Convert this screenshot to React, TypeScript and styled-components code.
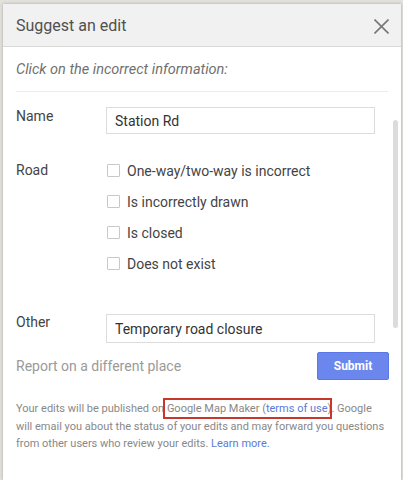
import React from "react";
import styled, { createGlobalStyle } from "styled-components";

const Global = createGlobalStyle`
  html, body { margin: 0; padding: 0; }
  body {
    background: #e3e1dc;
    font-family: Roboto, "Noto Sans", Arial, sans-serif;
    overflow: hidden;
    height: 480px;
  }
`;

const Page = styled.div`
  padding: 4px 2px 0 3px;
  height: 480px;
  box-sizing: border-box;
`;

const Dialog = styled.div`
  background: #fff;
  height: 100%;
  box-shadow: 0 0 3px rgba(0, 0, 0, 0.25);
  display: flex;
  flex-direction: column;
  position: relative;
`;

const Header = styled.div`
  background: #f1f1f1;
  border-bottom: 1px solid #d9d9d9;
  height: 42px;
  display: flex;
  align-items: center;
  justify-content: space-between;
  padding: 0 12px 0 13px;
`;

const Title = styled.div`
  font-size: 16px;
  color: #505050;
  padding-top: 1px;
`;

const Close = styled.button`
  border: none;
  background: none;
  padding: 0;
  width: 15px;
  height: 15px;
  display: flex;
  align-items: center;
  justify-content: center;
  cursor: pointer;
  margin-top: 2px;
`;

const Body = styled.div`
  padding: 0 12px 0 13px;
  position: relative;
`;

const Intro = styled.div`
  font-style: italic;
  font-size: 14.5px;
  color: #707070;
  padding: 14px 0 13px;
  border-bottom: 1px solid #ececec;
  margin-right: 1px;
`;

const Row = styled.div<{ $top: number }>`
  display: flex;
  align-items: flex-start;
  margin-top: ${(p) => p.$top}px;
`;

const Label = styled.div<{ $pt: number }>`
  width: 90px;
  font-size: 14px;
  color: #444;
  padding-top: ${(p) => p.$pt}px;
`;

const Field = styled.div<{ $h: number }>`
  width: 269px;
  height: ${(p) => p.$h}px;
  box-sizing: border-box;
  border: 1px solid #dcdcdc;
  padding: 0 8px;
  display: flex;
  align-items: center;
  font-size: 14px;
  color: #333;
`;

const Checks = styled.div`
  display: flex;
  flex-direction: column;
  gap: 14px;
`;

const Check = styled.label`
  display: flex;
  align-items: center;
  gap: 7px;
  font-size: 14px;
  color: #444;
  height: 17px;
  padding-left: 1px;
`;

const Box = styled.span`
  width: 11px;
  height: 11px;
  border: 1px solid #c8c8c8;
  border-radius: 1px;
  background: #fff;
`;

const Actions = styled.div`
  display: flex;
  align-items: center;
  justify-content: space-between;
  margin-top: 9px;
`;

const OtherLink = styled.div`
  font-size: 14px;
  color: #9a9a9a;
`;

const Submit = styled.button`
  width: 72px;
  height: 28px;
  border: 1px solid #5b78e6;
  border-radius: 2px;
  background: #6b87ee;
  color: #fff;
  font-family: Roboto, Arial, sans-serif;
  font-weight: bold;
  font-size: 12px;
`;

const Footer = styled.p`
  margin: 20px 0 0;
  font-size: 11px;
  line-height: 17.5px;
  color: #888;
`;

const Marked = styled.span`
  outline: 2px solid #c9372c;
  outline-offset: 2px;
`;

const A = styled.a`
  color: #5a7ad6;
  text-decoration: none;
`;

const Scrollbar = styled.div`
  position: absolute;
  right: 3px;
  top: 116px;
  width: 5px;
  height: 208px;
  border-radius: 3px;
  background: #dcdcdc;
`;

export default function App() {
  const items = [
    "One-way/two-way is incorrect",
    "Is incorrectly drawn",
    "Is closed",
    "Does not exist",
  ];
  return (
    <>
      <Global />
      <Page>
        <Dialog>
          <Header>
            <Title>Suggest an edit</Title>
            <Close aria-label="Close">
              <svg width="15" height="15" viewBox="0 0 15 15">
                <path d="M0.5 0.5L14.5 14.5M14.5 0.5L0.5 14.5" stroke="#777" strokeWidth="1.6" />
              </svg>
            </Close>
          </Header>
          <Body>
            <Intro>Click on the incorrect information:</Intro>
            <Row $top={15}>
              <Label $pt={1}>Name</Label>
              <Field $h={27}>Station Rd</Field>
            </Row>
            <Row $top={28}>
              <Label $pt={0}>Road</Label>
              <Checks>
                {items.map((t) => (
                  <Check key={t}>
                    <Box />
                    {t}
                  </Check>
                ))}
              </Checks>
            </Row>
            <Row $top={42}>
              <Label $pt={0}>Other</Label>
              <Field $h={29}>Temporary road closure</Field>
            </Row>
            <Actions>
              <OtherLink>Report on a different place</OtherLink>
              <Submit>Submit</Submit>
            </Actions>
            <Footer>
              Your edits will be published on{" "}
              <Marked>
                Google Map Maker (<A href="#">terms of use</A>
              </Marked>
              ). Google will email you about the status of your edits and may forward you
              questions from other users who review your edits. <A href="#">Learn more.</A>
            </Footer>
          </Body>
          <Scrollbar />
        </Dialog>
      </Page>
    </>
  );
}
